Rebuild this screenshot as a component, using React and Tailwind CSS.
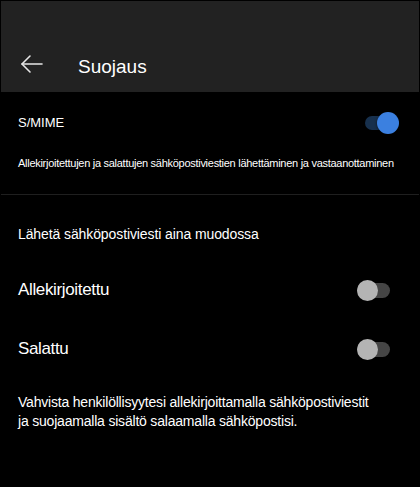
import React from 'react';

const font = { fontFamily: '"Liberation Sans", Arial, sans-serif' };

const Toggle = ({ on }) => {
    if (on) {
        return (
            <div className="relative w-[34px] h-[22px]">
                <div className="absolute left-0 right-[4px] top-[4px] h-[14px] rounded-full bg-[#17304d]" />
                <div className="absolute right-0 top-0 w-[22px] h-[22px] rounded-full bg-[#3b80e0] shadow-[0_1px_3px_rgba(0,0,0,0.6)]" />
            </div>
        );
    }
    return (
        <div className="relative w-[33px] h-[21px]">
            <div className="absolute left-0 right-0 top-[3px] h-[15px] rounded-full bg-[#454545]" />
            <div className="absolute left-0 top-0 w-[21px] h-[21px] rounded-full bg-[#b4b4b4]" />
        </div>
    );
};

const App = () => {
    return (
        <div className="w-[420px] h-[487px] bg-black border border-black text-white overflow-hidden" style={font}>
            {/* header */}
            <div className="h-[91px] bg-[#222222] flex items-start pt-[54px] pl-[19px]">
                <svg width="24" height="24" viewBox="0 0 24 24" fill="none" stroke="#e6e6e6" strokeWidth="1.6" strokeLinecap="round" strokeLinejoin="round" className="mt-[-3px]">
                    <path d="M22 12H2" />
                    <path d="M10 4L2 12l8 8" />
                </svg>
                <h1 className="ml-[34px] text-[19px] leading-6">Suojaus</h1>
            </div>

            {/* S/MIME */}
            <div className="pt-[16px]">
                <div className="h-[30px] flex items-center justify-between pl-[17px] pr-[20px]">
                    <span className="text-[13px]">S/MIME</span>
                    <Toggle on />
                </div>
                <p className="mt-[17px] px-[17px] text-[11px] leading-4 tracking-[-0.28px] whitespace-nowrap">
                    Allekirjoitettujen ja salattujen sähköpostiviestien lähettäminen ja vastaanottaminen
                </p>
                <div className="mt-[23px] h-px bg-[#1f1f1f]" />
            </div>

            {/* send options */}
            <div className="pt-[29px] px-[17px]">
                <p className="text-[14px] leading-5 tracking-[-0.1px]">Lähetä sähköpostiviesti aina muodossa</p>
                <div className="mt-[26px] h-[40px] flex items-center justify-between pr-[12px]">
                    <span className="text-[17px] tracking-[-0.35px]">Allekirjoitettu</span>
                    <Toggle />
                </div>
                <div className="mt-[19px] h-[40px] flex items-center justify-between pr-[12px]">
                    <span className="text-[17px] tracking-[-0.35px]">Salattu</span>
                    <Toggle />
                </div>
                <p className="mt-[24px] text-[14px] leading-[19px] tracking-[-0.2px]">
                    Vahvista henkilöllisyytesi allekirjoittamalla sähköpostiviestit<br />
                    ja suojaamalla sisältö salaamalla sähköpostisi.
                </p>
            </div>
        </div>
    );
};

export default App;
